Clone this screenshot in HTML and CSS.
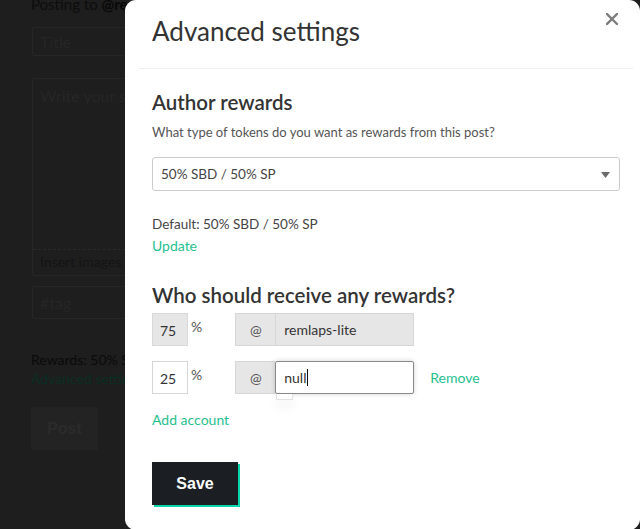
FILE: index.html
```html
<!DOCTYPE html>
<html>
<head>
<meta charset="utf-8">
<link rel="stylesheet" href="styles.css">
</head>
<body>
<div class="editor">
  <div class="posting">Posting to <b>@remlaps-lite</b></div>
  <div class="bg-input title-input">Title</div>
  <div class="bg-textarea">
    <div class="ta-body">Write your story...</div>
    <div class="ta-foot">Insert images by dragging &amp; dropping</div>
  </div>
  <div class="bg-input tag-input">#tag</div>
  <div class="bg-rewards">Rewards: 50% SBD / 50% SP</div>
  <div class="bg-adv">Advanced settings</div>
  <div class="bg-post">Post</div>
</div>

<div class="modal">
  <div class="modal-header">
    <h2 class="modal-title">Advanced settings</h2>
    <span class="close">
      <svg width="12" height="12" viewBox="0 0 12 12"><path d="M1 1L11 11M11 1L1 11" stroke="#7d7d7d" stroke-width="2.4" stroke-linecap="square"/></svg>
    </span>
  </div>
  <div class="modal-body">
    <h3 class="section-title">Author rewards</h3>
    <p class="hint">What type of tokens do you want as rewards from this post?</p>
    <div class="select">
      <span>50% SBD / 50% SP</span>
      <svg class="caret" width="9" height="6" viewBox="0 0 9 6"><path d="M0 0H9L4.5 6Z" fill="#6b6b6b"/></svg>
    </div>
    <p class="default">Default: 50% SBD / 50% SP</p>
    <a class="link update">Update</a>

    <h3 class="section-title who">Who should receive any rewards?</h3>
    <div class="ben-row">
      <div class="pct disabled">75</div>
      <span class="pct-sign">%</span>
      <div class="group">
        <div class="addon">@</div>
        <div class="acct disabled">remlaps-lite</div>
      </div>
    </div>
    <div class="ben-row second">
      <div class="pct">25</div>
      <span class="pct-sign">%</span>
      <div class="group">
        <div class="addon">@</div>
        <div class="acct focus">null<span class="cursor"></span><div class="ac-pop"></div></div>
      </div>
      <a class="link remove">Remove</a>
    </div>
    <a class="link add">Add account</a>

    <button class="save">Save</button>
  </div>
</div>
</body>
</html>
```

FILE: styles.css
```css
html, body {
  margin: 0;
  padding: 0;
  height: 100%;
  overflow: hidden;
}
body {
  background: #1e1e1e;
  font-family: "Lato", "Open Sans", sans-serif;
  position: relative;
}

/* background editor (dimmed) */
.editor {
  padding: 0 0 0 31px;
  width: 320px;
  color: #0f0f0f;
  font-size: 14px;
}
.posting {
  height: 14px;
  line-height: 8px;
  overflow: hidden;
  font-size: 15px;
  color: #0d0d0d;
}
.posting b { color: #080808; }
.bg-input {
  margin-left: 1px;
  border: 1px solid #262626;
  border-radius: 2px;
  color: #262626;
  font-size: 16px;
  padding: 0 7px;
  box-sizing: border-box;
}
.title-input {
  margin-top: 13px;
  height: 29px;
  line-height: 27px;
}
.bg-textarea {
  margin: 22px 0 0 1px;
  height: 198px;
  border: 1px solid #262626;
  border-radius: 2px;
  box-sizing: border-box;
  display: flex;
  flex-direction: column;
}
.ta-body {
  flex: 1;
  padding: 7px 7px;
  font-size: 16px;
  color: #262626;
  border-bottom: 1px dashed #2a2a2a;
}
.ta-foot {
  height: 25px;
  line-height: 24px;
  padding: 0 7px;
  color: #141414;
}
.tag-input {
  margin-top: 10px;
  height: 33px;
  line-height: 31px;
}
.bg-rewards {
  margin-top: 32px;
  line-height: 18px;
  color: #0a0a0a;
}
.bg-adv {
  line-height: 20px;
  color: #0b2e24;
}
.bg-post {
  margin-top: 18px;
  width: 67px;
  height: 43px;
  line-height: 43px;
  background: #232323;
  color: #2b2b2b;
  text-align: center;
  font-family: "Liberation Sans", Arial, sans-serif;
  font-weight: bold;
  font-size: 16px;
}

/* modal */
.modal {
  position: absolute;
  left: 125px;
  right: 0;
  top: 0;
  height: 530px;
  background: #fff;
  border-radius: 11px;
  color: #333;
}
.modal-header {
  margin: 0 7px 0 14px;
  height: 69px;
  border-bottom: 1px solid #eeeeee;
  display: flex;
  align-items: flex-start;
  justify-content: space-between;
  box-sizing: border-box;
}
.modal-title {
  margin: 14px 0 0 13px;
  font-size: 26px;
  font-weight: 400;
  line-height: 34px;
  color: #333;
}
.close {
  margin: 13px 15px 0 0;
  display: block;
  width: 12px;
  height: 12px;
}
.close svg { display: block; }

.modal-body {
  padding: 19px 20px 0 27px;
}
.section-title {
  margin: 0;
  font-size: 20.5px;
  font-weight: 600;
  line-height: 28px;
  color: #333;
}
.hint {
  margin: 7px 0 0;
  font-size: 13px;
  line-height: 18px;
  color: #555;
}
.select {
  margin-top: 16px;
  height: 34px;
  border: 1px solid #cccccc;
  border-radius: 3px;
  box-sizing: border-box;
  display: flex;
  align-items: center;
  justify-content: space-between;
  padding: 0 9px 0 8px;
  font-size: 13.5px;
  color: #444;
}
.caret { display: block; margin-top: 1px; }
.default {
  margin: 24px 0 0;
  font-size: 13.5px;
  line-height: 18px;
  color: #444;
}
.link {
  display: block;
  color: #1fbf8f;
  font-size: 14px;
  line-height: 18px;
  text-decoration: none;
}
.update { margin-top: 4px; width: max-content; }
.who { margin-top: 26px; }

.ben-row {
  margin-top: 4px;
  display: flex;
  align-items: flex-start;
  height: 33px;
  font-size: 14px;
}
.ben-row.second { margin-top: 15px; }
.pct {
  width: 36px;
  height: 33px;
  box-sizing: border-box;
  border: 1px solid #d6d6d6;
  padding-left: 7px;
  line-height: 33px;
  color: #333;
  background: #fff;
}
.pct.disabled {
  background: #e6e6e6;
  border-color: #d9d9d9;
}
.pct-sign {
  margin: 6px 33px 0 3px;
  color: #555;
  line-height: 16px;
}
.group {
  display: flex;
  width: 179px;
  height: 33px;
  position: relative;
}
.addon {
  width: 40px;
  box-sizing: border-box;
  border: 1px solid #d6d6d6;
  border-right: none;
  background: #e6e6e6;
  text-align: center;
  line-height: 31px;
  color: #555;
}
.acct {
  flex: 1;
  box-sizing: border-box;
  border: 1px solid #d6d6d6;
  padding-left: 8px;
  line-height: 31px;
  color: #333;
  position: relative;
}
.acct.disabled { background: #e6e6e6; }
.acct.focus {
  border-color: #8a8a8a;
  background: #fff;
  box-shadow: 0 0 5px rgba(0,0,0,0.18);
  border-radius: 2px;
  display: flex;
  align-items: center;
}
.cursor {
  display: inline-block;
  width: 1px;
  height: 17px;
  background: #111;
  margin-left: 1px;
}
.ac-pop {
  position: absolute;
  left: 0;
  top: 32px;
  width: 17px;
  height: 6px;
  border: 1px solid #e2e2e2;
  border-top: none;
  box-sizing: border-box;
  box-shadow: 0 6px 12px rgba(0,0,0,0.08);
  background: #fff;
}
.remove {
  margin: 8px 0 0 16px;
}
.add { margin-top: 17px; width: max-content; }

.save {
  margin-top: 33px;
  width: 86px;
  height: 43px;
  border: none;
  background: #1b1f24;
  color: #fff;
  font-family: "Liberation Sans", Arial, sans-serif;
  font-weight: bold;
  font-size: 16px;
  box-shadow: 2px 2px 0 #06d6a9;
  padding: 0;
  display: block;
}
```
